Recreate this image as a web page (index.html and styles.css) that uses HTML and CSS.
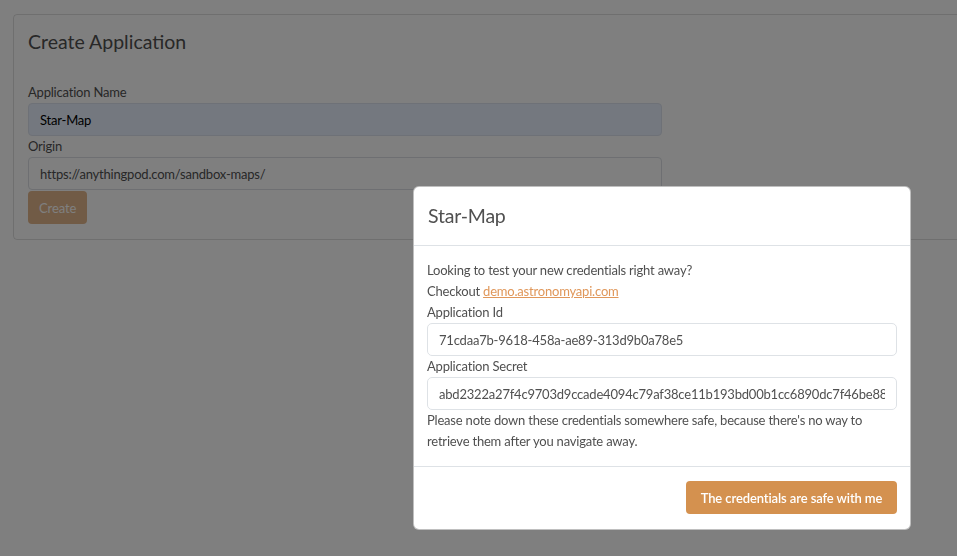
FILE: index.html
```html
<!DOCTYPE html>
<html lang="en">
<head>
<meta charset="utf-8">
<title>Create Application</title>
<link rel="stylesheet" href="styles.css">
</head>
<body>
<main class="page">
  <section class="card">
    <h4 class="card-title">Create Application</h4>
    <form class="form">
      <label class="label" for="name">Application Name</label>
      <input class="input input-autofill" id="name" type="text" value="Star-Map">
      <label class="label" for="origin">Origin</label>
      <input class="input" id="origin" type="text" value="https://anythingpod.com/sandbox-maps/">
      <div class="actions">
        <button class="btn btn-disabled" type="button" disabled>Create</button>
      </div>
    </form>
  </section>
</main>
<div class="backdrop"></div>
<div class="modal">
  <div class="modal-header">
    <h4 class="modal-title">Star-Map</h4>
  </div>
  <div class="modal-body">
    <p class="text">Looking to test your new credentials right away?</p>
    <p class="text">Checkout <a class="link" href="#">demo.astronomyapi.com</a></p>
    <label class="label" for="appid">Application Id</label>
    <input class="input input-modal" id="appid" type="text" value="71cdaa7b-9618-458a-ae89-313d9b0a78e5" readonly>
    <label class="label" for="secret">Application Secret</label>
    <input class="input input-modal" id="secret" type="text" value="abd2322a27f4c9703d9ccade4094c79af38ce11b193bd00b1cc6890dc7f46be88c2a1f0e" readonly>
    <p class="text">Please note down these credentials somewhere safe, because there's no way to retrieve them after you navigate away.</p>
  </div>
  <div class="modal-footer">
    <button class="btn btn-primary" type="button">The credentials are safe with me</button>
  </div>
</div>
</body>
</html>
```
FILE: styles.css
```css
* { box-sizing: border-box; }
html, body {
  margin: 0;
  padding: 0;
  overflow: hidden;
  background: #ffffff;
}
body {
  font-family: "Lato", "Liberation Sans", sans-serif;
  font-size: 13px;
  line-height: 21px;
  letter-spacing: -0.2px;
  color: #505050;
  width: 957px;
  height: 556px;
}
.page {
  padding: 14px 0 0 13px;
}
.card {
  width: 980px;
  border: 1px solid rgba(0,0,0,0.13);
  border-radius: 4px;
  padding: 14px 14px 15px;
}
.card-title {
  margin: 0 0 28px;
  font-size: 19.5px;
  line-height: 25px;
  font-weight: 400;
  letter-spacing: 0;
  color: #505050;
}
.form {
  display: flex;
  flex-direction: column;
  width: 634px;
}
.label {
  display: block;
  font-size: 13px;
  line-height: 21px;
}
.input {
  display: block;
  width: 100%;
  height: 33px;
  padding: 0 11px;
  border: 1px solid #dcdfe4;
  border-radius: 4px;
  font-family: inherit;
  font-size: 13px;
  letter-spacing: -0.2px;
  color: #505050;
  background: #ffffff;
  outline: none;
}
.input-autofill {
  background: #e8f0fe;
  border-color: #dde3ee;
  color: #000000;
}
.actions {
  display: flex;
  padding-top: 1px;
}
.btn {
  height: 33px;
  padding: 0 11px;
  border: none;
  border-radius: 4px;
  font-family: inherit;
  font-size: 13px;
  letter-spacing: -0.1px;
  color: #ffffff;
  background: #d4914f;
}
.btn-disabled {
  opacity: 0.65;
}
.btn-primary {
  font-weight: 600;
  padding: 0 11px;
  width: 211px;
}
.backdrop {
  position: fixed;
  inset: 0;
  background: rgba(0,0,0,0.5);
}
.modal {
  position: fixed;
  left: 413px;
  top: 186px;
  width: 498px;
  background: #ffffff;
  border: 1px solid rgba(0,0,0,0.25);
  border-radius: 6px;
  overflow: hidden;
}
.modal-header {
  padding: 14px;
  border-bottom: 1px solid #dee2e6;
}
.modal-title {
  margin: 0;
  font-size: 19.5px;
  line-height: 30px;
  font-weight: 400;
  letter-spacing: -0.2px;
  color: #505050;
}
.modal-body {
  padding: 14px 13px 14px 13px;
}
.text {
  margin: 0;
}
.link {
  color: #e0975a;
  text-decoration: underline;
}
.input-modal {
  border-color: #dee2e6;
  border-radius: 5px;
}
.modal-footer {
  display: flex;
  justify-content: flex-end;
  padding: 14px 13px 15px;
  border-top: 1px solid #dee2e6;
}
```
